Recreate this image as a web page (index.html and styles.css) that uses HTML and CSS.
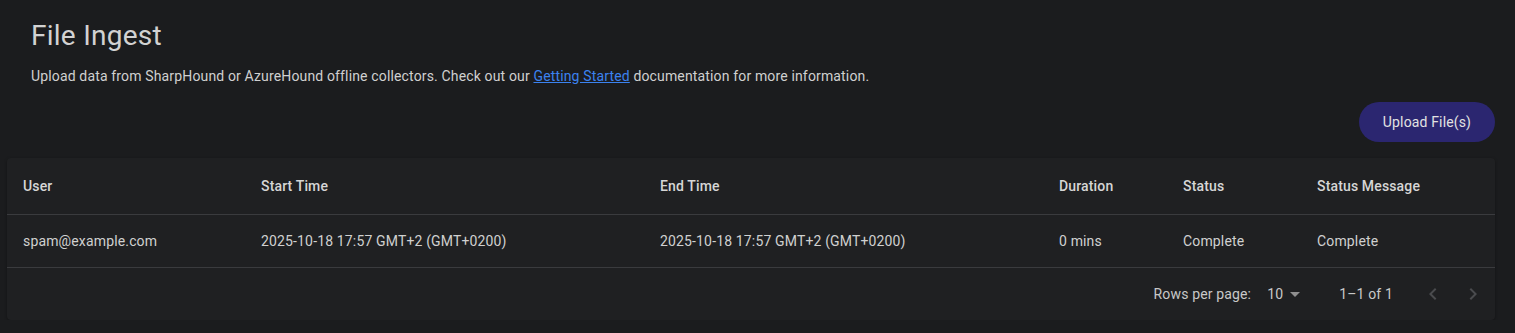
FILE: index.html
```html
<!DOCTYPE html>
<html>
<head>
<meta charset="utf-8">
<link rel="stylesheet" href="styles.css">
</head>
<body>
<div class="page">
  <div class="intro">
    <h1 class="title">File Ingest</h1>
    <p class="desc">Upload data from SharpHound or AzureHound offline collectors. Check out our <a class="link" href="#">Getting Started</a> documentation for more information.</p>
  </div>
  <div class="actions">
    <button class="upload-btn">Upload File(s)</button>
  </div>
  <div class="paper">
    <table class="tbl">
      <colgroup>
        <col style="width:238px"><col style="width:399px"><col style="width:399px"><col style="width:124px"><col style="width:134px"><col style="width:194px">
      </colgroup>
      <thead>
        <tr><th>User</th><th>Start Time</th><th>End Time</th><th>Duration</th><th>Status</th><th>Status Message</th></tr>
      </thead>
      <tbody>
        <tr><td>spam@example.com</td><td>2025-10-18 17:57 GMT+2 (GMT+0200)</td><td>2025-10-18 17:57 GMT+2 (GMT+0200)</td><td>0 mins</td><td>Complete</td><td>Complete</td></tr>
      </tbody>
    </table>
    <div class="pager">
      <span class="rpp-label">Rows per page:</span>
      <span class="rpp-select">10<svg class="caret" width="24" height="24" viewBox="0 0 24 24"><path d="M7 10l5 5 5-5z" fill="#8f8f8f"/></svg></span>
      <span class="range">1–1 of 1</span>
      <span class="actions-nav">
        <span class="nav">
          <svg width="24" height="24" viewBox="0 0 24 24"><path d="M15.41 7.41 14 6l-6 6 6 6 1.41-1.41L10.83 12z" fill="#4a4b4e"/></svg>
        </span>
        <span class="nav">
          <svg width="24" height="24" viewBox="0 0 24 24"><path d="M10 6 8.59 7.41 13.17 12l-4.58 4.59L10 18l6-6z" fill="#4a4b4e"/></svg>
        </span>
      </span>
    </div>
  </div>
</div>
</body>
</html>
```
FILE: styles.css
```css
html, body {
  margin: 0;
  padding: 0;
  background: #1b1c1e;
  font-family: Roboto, "Liberation Sans", sans-serif;
  color: #d4d4d4;
}
.page {
  padding: 0 20px 0 7px;
}
.intro {
  padding: 18px 24px 0 24px;
}
.title {
  margin: 0;
  font-size: 28px;
  font-weight: 400;
  line-height: 36px;
  letter-spacing: 0.25px;
  color: #d2d2d2;
}
.desc {
  margin: 12px 0 0 0;
  font-size: 14px;
  line-height: 20px;
  letter-spacing: 0.15px;
  color: #d0d0d0;
}
.link {
  color: #3b82f0;
  text-decoration: underline;
}
.actions {
  display: flex;
  justify-content: flex-end;
  margin-top: 16px;
}
.upload-btn {
  height: 40px;
  width: 136px;
  border: none;
  border-radius: 20px;
  background: #2b2670;
  color: #e2e2e2;
  font-family: Roboto, "Liberation Sans", sans-serif;
  font-size: 14px;
  font-weight: 400;
  letter-spacing: 0.15px;
}
.paper {
  margin-top: 16px;
  background: #1f2022;
  border-radius: 4px;
  box-shadow: 0 1px 3px rgba(0, 0, 0, 0.35);
}
.tbl {
  width: 100%;
  border-collapse: collapse;
  table-layout: fixed;
  font-size: 14px;
  letter-spacing: 0.15px;
}
.tbl th {
  text-align: left;
  font-weight: 500;
  color: #d6d6d6;
  height: 56px;
  padding: 0 16px;
  border-bottom: 1px solid #3a3b3e;
}
.tbl td {
  height: 52px;
  padding: 0 16px;
  color: #d0d0d0;
  border-bottom: 1px solid #3a3b3e;
}
.pager {
  display: flex;
  align-items: center;
  justify-content: flex-end;
  height: 52px;
  padding-right: 2px;
  font-size: 14px;
  letter-spacing: 0.15px;
  color: #c8c8c8;
}
.rpp-select {
  display: flex;
  align-items: center;
  margin-left: 8px;
  padding-left: 8px;
  margin-right: 32px;
}
.actions-nav {
  display: flex;
  margin-left: 20px;
}
.nav {
  display: flex;
  align-items: center;
  justify-content: center;
  width: 40px;
  height: 40px;
}
```
